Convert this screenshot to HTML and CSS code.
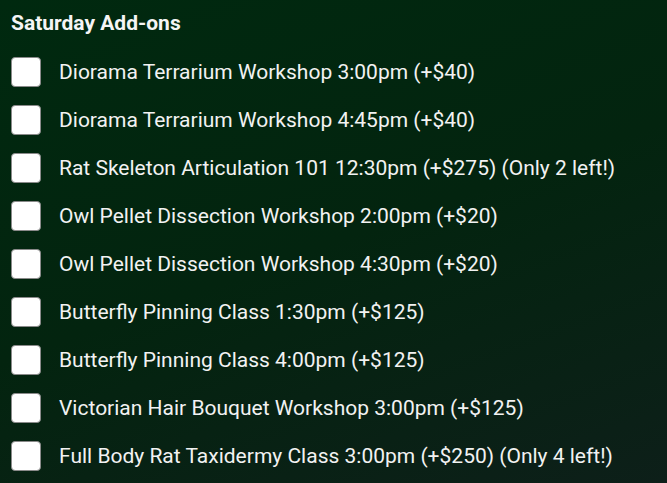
FILE: index.html
```html
<!DOCTYPE html>
<html>
<head>
<meta charset="utf-8">
<link rel="stylesheet" href="styles.css">
</head>
<body>
<div class="panel">
  <h2 class="title">Saturday Add-ons</h2>
  <ul class="options">
    <li class="option"><span class="box"></span><span class="label">Diorama Terrarium Workshop 3:00pm (+$40)</span></li>
    <li class="option"><span class="box"></span><span class="label">Diorama Terrarium Workshop 4:45pm (+$40)</span></li>
    <li class="option"><span class="box"></span><span class="label">Rat Skeleton Articulation 101 12:30pm (+$275) (Only 2 left!)</span></li>
    <li class="option"><span class="box"></span><span class="label">Owl Pellet Dissection Workshop 2:00pm (+$20)</span></li>
    <li class="option"><span class="box"></span><span class="label">Owl Pellet Dissection Workshop 4:30pm (+$20)</span></li>
    <li class="option"><span class="box"></span><span class="label">Butterfly Pinning Class 1:30pm (+$125)</span></li>
    <li class="option"><span class="box"></span><span class="label">Butterfly Pinning Class 4:00pm (+$125)</span></li>
    <li class="option"><span class="box"></span><span class="label">Victorian Hair Bouquet Workshop 3:00pm (+$125)</span></li>
    <li class="option"><span class="box"></span><span class="label">Full Body Rat Taxidermy Class 3:00pm (+$250) (Only 4 left!)</span></li>
  </ul>
</div>
</body>
</html>
```
FILE: styles.css
```css
html, body {
  margin: 0;
  height: 100%;
}
body {
  background: linear-gradient(160deg, #00290f 0%, #03240f 50%, #0d1f19 100%);
  font-family: Roboto, "Noto Sans", sans-serif;
  color: #f2f2f2;
  overflow: hidden;
}
.panel {
  padding: 10px 11px 0;
}
.title {
  margin: 0;
  font-size: 21px;
  font-weight: 700;
  line-height: 26px;
  color: #f5f5f5;
}
.options {
  list-style: none;
  margin: 0;
  padding: 0;
  margin-top: 21px;
  display: flex;
  flex-direction: column;
  gap: 18px;
}
.option {
  display: flex;
  align-items: center;
  gap: 18px;
  height: 30px;
}
.box {
  width: 28px;
  height: 28px;
  background: #fff;
  border: 1px solid #8a8a8a;
  border-radius: 4px;
  flex: none;
}
.label {
  font-size: 21px;
  line-height: 30px;
  white-space: nowrap;
}
```
